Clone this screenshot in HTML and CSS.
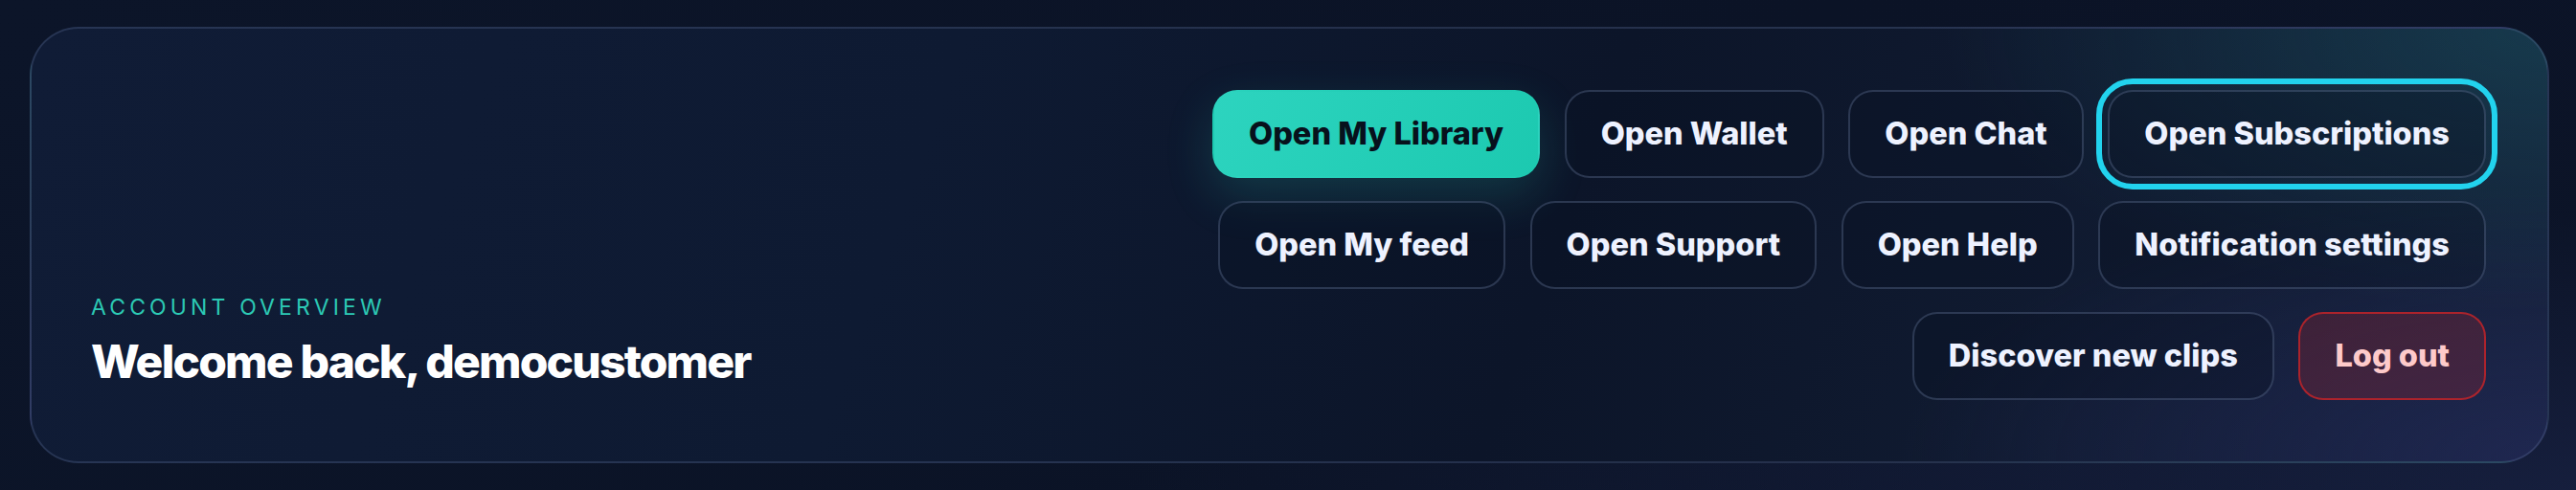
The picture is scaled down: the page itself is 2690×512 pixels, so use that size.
FILE: index.html
```html
<!DOCTYPE html>
<html lang="en">
<head>
<meta charset="utf-8">
<title>Account overview</title>
<link rel="stylesheet" href="styles.css">
</head>
<body>
<main class="page">
  <section class="hero">
    <div class="intro">
      <p class="eyebrow">ACCOUNT OVERVIEW</p>
      <h1 class="title">Welcome back, democustomer</h1>
    </div>
    <nav class="actions">
      <button class="btn btn-primary">Open My Library</button>
      <button class="btn">Open Wallet</button>
      <button class="btn">Open Chat</button>
      <button class="btn btn-focus">Open Subscriptions</button>
      <button class="btn">Open My feed</button>
      <button class="btn">Open Support</button>
      <button class="btn">Open Help</button>
      <button class="btn">Notification settings</button>
      <button class="btn">Discover new clips</button>
      <button class="btn btn-danger">Log out</button>
    </nav>
  </section>
</main>
</body>
</html>
```

FILE: styles.css
```css
* { box-sizing: border-box; }

html, body {
  margin: 0;
  height: 100%;
}

body {
  background:
    radial-gradient(ellipse at 100% 100%, rgba(40, 50, 100, 0.35), transparent 40%),
    linear-gradient(135deg, #0c1529 0%, #0b1326 60%, #0c1428 100%);
  font-family: Inter, "Noto Sans", "Liberation Sans", sans-serif;
  color: #eef2ff;
}

.page {
  padding: 28px 28px 28px 31px;
}

.hero {
  display: flex;
  justify-content: space-between;
  align-items: flex-end;
  min-height: 455px;
  padding: 64px 64px 64px 62px;
  border: 2px solid rgba(100, 120, 160, 0.28);
  border-radius: 51px;
  background:
    radial-gradient(ellipse 900px 420px at 100% 0%, rgba(30, 110, 120, 0.34), transparent 70%),
    radial-gradient(ellipse 900px 380px at 100% 100%, rgba(40, 45, 100, 0.55), transparent 75%),
    linear-gradient(110deg, #101c36 0%, #0e1a32 35%, #0c1529 60%, #142038 100%);
}

.intro {
  padding-bottom: 11px;
}

.eyebrow {
  margin: 0 0 12px;
  font-size: 23px;
  line-height: 32px;
  font-weight: 400;
  letter-spacing: 0.18em;
  color: #2cc9b4;
}

.title {
  margin: 0;
  font-size: 48px;
  line-height: 58px;
  font-weight: 800;
  letter-spacing: -0.038em;
  color: #ffffff;
}

.actions {
  display: flex;
  flex-wrap: wrap;
  justify-content: flex-end;
  gap: 24.5px 25.6px;
  max-width: 1450px;
}

.btn {
  font-family: Inter, "Noto Sans", "Liberation Sans", sans-serif;
  font-size: 32.5px;
  line-height: 39.7px;
  font-weight: 800;
  letter-spacing: 0;
  color: #eef2ff;
  padding: 24px 36px;
  border: 2px solid rgba(120, 140, 180, 0.3);
  border-radius: 26px;
  background: rgba(10, 16, 34, 0.35);
  white-space: nowrap;
}

.btn-primary {
  color: #07111c;
  border-color: transparent;
  background: linear-gradient(120deg, #2dd4bf 0%, #1cc9b0 100%);
  box-shadow: 0 18px 50px rgba(45, 212, 191, 0.18);
}

.btn-focus {
  outline: 6px solid #22d3ee;
  outline-offset: 6px;
}

.btn-danger {
  color: #fecaca;
  border-color: rgba(200, 36, 40, 0.8);
  background: rgba(220, 38, 38, 0.2);
}
```
